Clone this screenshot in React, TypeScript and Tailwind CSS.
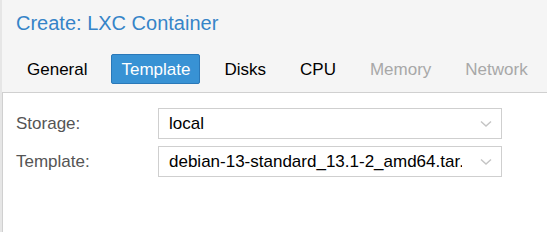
import React from "react";

const tabs = [
  { label: "General", state: "normal" },
  { label: "Template", state: "active" },
  { label: "Disks", state: "normal" },
  { label: "CPU", state: "normal" },
  { label: "Memory", state: "disabled" },
  { label: "Network", state: "disabled" },
];

const Chevron = () => (
  <svg width="12" height="8" viewBox="0 0 12 8" className="shrink-0">
    <path d="M1 1.5 L6 6 L11 1.5" fill="none" stroke="#c4c4c4" strokeWidth="1.4" />
  </svg>
);

const Field = ({ label, value }: { label: string; value: string }) => (
  <div className="flex items-center">
    <span className="w-[142px] text-[17px] text-[#555]">{label}</span>
    <div className="flex h-[31px] w-[344px] items-center border border-[#cfcfcf] bg-white pl-[10px] pr-[9px]">
      <span className="flex-1 overflow-hidden whitespace-nowrap text-[17px] text-black">
        {value}
      </span>
      <div className="flex w-[30px] justify-end">
        <Chevron />
      </div>
    </div>
  </div>
);

const App = () => {
  return (
    <div
      className="flex h-[232px] w-[547px] flex-col border-l-2 border-[#e6e6e6] bg-[#f5f5f5]"
      style={{ fontFamily: '"Liberation Sans", Arial, sans-serif' }}
    >
      <div className="pl-[14px] pt-[10px] text-[20px] leading-[26px] text-[#3584c8]">
        Create: LXC Container
      </div>
      <div className="mt-[18px] flex items-center gap-[14px] pl-[15px]">
        {tabs.map((t) =>
          t.state === "active" ? (
            <div
              key={t.label}
              className="flex h-[30px] items-center rounded-[2px] border border-[#2a78b8] bg-[#3892d4] px-[9px] pt-[2px] text-[17px] text-white"
            >
              {t.label}
            </div>
          ) : (
            <div
              key={t.label}
              className={
                "flex h-[30px] items-center px-[10px] pt-[2px] text-[17px] " +
                (t.state === "disabled" ? "text-[#a8a8a8]" : "text-black")
              }
            >
              {t.label}
            </div>
          )
        )}
      </div>
      <div className="mt-[8px] flex flex-1 flex-col gap-[7px] border-l border-t border-[#d0d0d0] bg-white pl-[13px] pt-[15px]">
        <Field label="Storage:" value="local" />
        <Field label="Template:" value="debian-13-standard_13.1-2_amd64.tar.zst" />
      </div>
    </div>
  );
};

export default App;
